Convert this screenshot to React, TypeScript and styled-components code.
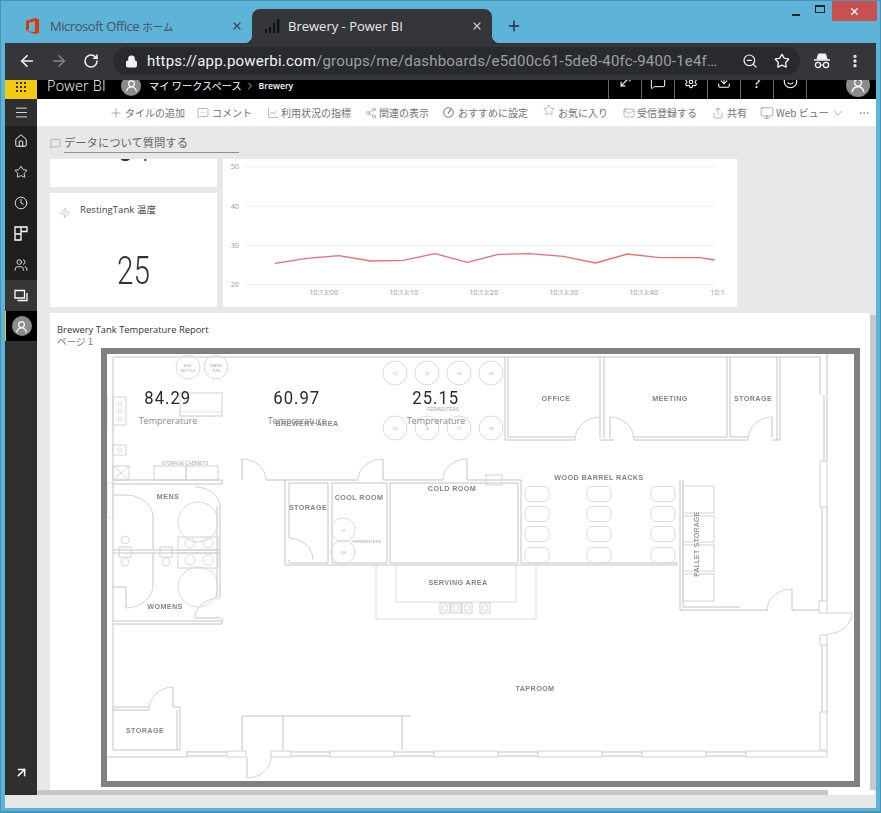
import React from "react";
import styled, { createGlobalStyle } from "styled-components";
import {
  ArrowLeft, ArrowRight, RotateCw, Lock, ZoomOut, Star, MoreVertical, Plus, X, Home, Clock, Menu,
  ArrowUpRight, MessageSquare, MessageSquareMore, LineChart, Share2, Mail, Share, Monitor, ChevronDown, ChevronRight,
  MoreHorizontal, Zap, Download, Settings, Smile, Users, MoveDiagonal,
} from "lucide-react";

const UI = `"Open Sans", "Noto Sans CJK JP", sans-serif`;
const JP = `"Noto Sans CJK JP", "Open Sans", sans-serif`;

const Global = createGlobalStyle`
  html, body { margin: 0; padding: 0; background: #5eb3d9; }
  * { box-sizing: border-box; }
`;

const Win = styled.div`
  width: 881px; height: 813px; background: #5eb3d9; border-top: 1px solid #4a93b6;
  border-left: 1px solid #4a93b6; border-right: 1px solid #4a93b6; border-bottom: 2px solid #4a93b6;
  padding: 0 4px 3px 4px; display: flex; flex-direction: column; overflow: hidden; font-family: ${UI};
`;
const TabStrip = styled.div`height: 42px; flex: none; display: flex; align-items: flex-end; position: relative;`;
const Tab = styled.div<{ $active?: boolean }>`
  width: ${p => (p.$active ? 240 : 247)}px; height: 34px; display: flex; align-items: center; gap: ${p => (p.$active ? 8 : 10)}px;
  padding: 0 9px 0 ${p => (p.$active ? 12 : 21)}px; font: 13px ${UI}; border-radius: 8px 8px 0 0;
  color: ${p => (p.$active ? "#e8eaed" : "#46525c")}; background: ${p => (p.$active ? "#35363a" : "transparent")};
  flex: none; position: relative;
  ${p => p.$active && `
    &::before, &::after { content: ""; position: absolute; bottom: 0; width: 8px; height: 8px; }
    &::before { left: -8px; background: radial-gradient(circle at 0 0, transparent 8px, #35363a 8.5px); }
    &::after { right: -8px; background: radial-gradient(circle at 100% 0, transparent 8px, #35363a 8.5px); }
  `}
`;
const TabTitle = styled.span<{ $tight?: boolean }>`flex: 1; white-space: nowrap; overflow: hidden; letter-spacing: ${p => (p.$tight ? "-.45px" : "0")};`;
const TabKana = styled.span`font: 10.5px ${JP}; letter-spacing: 0; margin-left: 3px;`;
const NewTab = styled.div`width: 44px; height: 34px; display: flex; align-items: center; justify-content: center; color: #26323a;`;
const WinControls = styled.div`position: absolute; right: -1px; top: 0; display: flex; align-items: flex-start;`;
const WinButton = styled.div<{ $w: number; $close?: boolean }>`
  width: ${p => p.$w}px; height: 20px; display: flex; align-items: center; justify-content: center;
  background: ${p => (p.$close ? "#c75050" : "transparent")}; color: ${p => (p.$close ? "#fff" : "#222")};
`;
const MinBar = styled.div`width: 8px; height: 2px; background: #222; margin-top: 8px;`;
const MaxBox = styled.div`width: 10px; height: 8px; border: 1px solid #222; border-top-width: 2px; margin-top: -4px;`;

const Toolbar = styled.div`
  height: 37px; flex: none; background: #35363a; display: flex; align-items: flex-start; padding-top: 4px; color: #fff;
`;
const NavIcon = styled.div<{ $w: number; $dim?: boolean }>`
  width: ${p => p.$w}px; height: 28px; display: flex; align-items: center; justify-content: center; flex: none;
  color: ${p => (p.$dim ? "#86888b" : "#f1f3f4")};
`;
const Omnibox = styled.div`
  width: 687px; height: 28px; flex: none; background: #292a2d; border-radius: 14px;
  display: flex; align-items: center; padding-left: 12px;
`;
const Url = styled.div`
  width: 588px; margin-left: 9px; font: 15px "Roboto", sans-serif; color: #9aa0a6; white-space: nowrap; overflow: hidden;
  letter-spacing: .2px; flex: none;
`;
const UrlHost = styled.span`color: #f1f3f4;`;

const Body = styled.div`flex: 1; display: flex; flex-direction: column; background: #e8e8e8; min-height: 0;`;
const Row = styled.div`flex: 1; display: flex; min-height: 0;`;
const Footer = styled.div`height: 13px; flex: none; background: #e8e8e8;`;

const Nav = styled.div`width: 32px; flex: none; background: #2f2f2f; display: flex; flex-direction: column; color: #fff;`;
const Waffle = styled.div`
  height: 19px; background: #f2c811; display: grid; grid-template-columns: repeat(3, 2px); gap: 2px; justify-content: center;
  align-content: center; padding-bottom: 6px;
`;
const Dot = styled.i`width: 2px; height: 2px; background: #3a2f00; display: block;`;
const NavItem = styled.div<{ $h?: number; $bg?: string; $mark?: boolean }>`
  height: ${p => p.$h ?? 31}px; display: flex; align-items: center; justify-content: center; flex: none;
  background: ${p => p.$bg ?? "#1f1f1f"}; border-left: ${p => (p.$mark ? "1px solid #f2c811" : "0")};
`;
const NavSpacer = styled.div`flex: 1;`;
const NavBottom = styled.div`height: 30px; display: flex; align-items: flex-start; justify-content: center; color: #fff;`;

const Main = styled.div`flex: 1; min-width: 0; display: flex; flex-direction: column;`;
const Header = styled.div`
  height: 19px; flex: none; background: #000; color: #fff; display: flex; align-items: center; overflow: hidden; position: relative;
`;
const Brand = styled.div`width: 84px; padding-left: 10px; font: 300 14.5px ${UI}; line-height: 19px; margin-top: -9px; white-space: nowrap; flex: none; letter-spacing: .15px;`;
const Crumb = styled.div`font: 10.1px ${JP}; line-height: 14px; margin-left: 8px; white-space: nowrap; margin-top: -8px; letter-spacing: .1px;`;
const CrumbChevron = styled(ChevronRight)`margin: -8px 0 0 2px; flex: none;`;
const CrumbLeaf = styled.div`font: 600 8.6px ${UI}; line-height: 12px; margin-left: 3px; margin-top: -8px; white-space: nowrap;`;
const Avatar = styled.div<{ $d: number; $y?: number }>`
  width: ${p => p.$d}px; height: ${p => p.$d}px; border-radius: 50%; background: #8c8c8c; flex: none; overflow: hidden;
  display: flex; align-items: center; justify-content: center; margin-top: ${p => p.$y ?? 0}px;
`;
const HeadCells = styled.div`display: flex; margin-left: auto; height: 19px; align-items: stretch;`;
const HeadCell = styled.div`
  width: 33px; border-left: 1px solid #6a6a6a; display: flex; justify-content: center; align-items: center; overflow: hidden; flex: none;
  & > svg { margin-top: -16px; flex: none; }
`;
const HeadMark = styled.span`font: 600 14px "Open Sans", sans-serif; line-height: 16px; margin-top: -13px; color: #f7e9a8;`;
const HeadAvatarCell = styled.div`width: 70px; border-left: 1px solid #6a6a6a; flex: none; display: flex; justify-content: flex-end; padding-right: 6px; align-items: center;`;

const Commands = styled.div`
  height: 27px; flex: none; background: #fff; display: flex; align-items: center; padding-left: 72px; color: #727272;
  position: relative;
`;
const Cmd = styled.div<{ $w: number; $gap?: number }>`
  width: ${p => p.$w}px; flex: none; display: flex; align-items: center; gap: ${p => p.$gap ?? 2}px; font: 10px ${JP}; white-space: nowrap;
  & > svg { flex: none; }
`;
const RaisedStar = styled(Star)`margin-top: -5px;`;
const CmdChevron = styled(ChevronDown)`margin-left: -28px; flex: none;`;
const CmdMore = styled(MoreHorizontal)`margin-left: 13px; flex: none;`;

const Content = styled.div`
  flex: 1; min-height: 0; position: relative; overflow: hidden; padding: 0 0 0 13px; display: flex; flex-direction: column;
`;
const Ask = styled.div`height: 33px; flex: none; display: flex; align-items: flex-start; padding-top: 8px; color: #888;`;
const AskIcon = styled(MessageSquare)`margin-top: 4px; flex: none;`;
const AskField = styled.div`
  width: 175px; height: 19px; margin-left: 3px; border-bottom: 1px solid #8f8f8f; font: 11.3px ${JP}; color: #666; line-height: 17px; white-space: nowrap;
`;
const Tiles = styled.div`display: grid; grid-template-columns: 167px 514px; grid-template-rows: 28px 114px; gap: 6px; flex: none;`;
const Tile = styled.div`background: #fff; overflow: hidden; position: relative;`;
const CutNumber = styled.div`font: 300 38px "Roboto", sans-serif; color: #333; text-align: center; line-height: 38px; margin-top: -30px; transform: scaleX(.78);`;
const ChartTile = styled(Tile)`grid-column: 2; grid-row: 1 / span 2;`;
const TileHead = styled.div`display: flex; align-items: flex-start; padding: 10px 0 0 9px; gap: 9px; color: #999;`;
const TileIcon = styled(Zap)`margin-top: 4px; flex: none;`;
const TileTitle = styled.div`font: 9.6px ${UI}; color: #444; white-space: nowrap; line-height: 13px;`;
const BigNumber = styled.div`
  font: 300 38px "Roboto", sans-serif; color: #333; text-align: center; margin-top: 32px; line-height: 40px; transform: scaleX(.78);
`;
const Report = styled.div`
  flex: 1; min-height: 0; margin-top: 6px; background: #fff; display: flex; flex-direction: column; padding: 11px 0 0 7px; width: 820px;
`;
const ReportTitle = styled.div`font: 9.4px ${UI}; color: #333; line-height: 11px; white-space: nowrap;`;
const ReportPage = styled.div`font: 9.6px ${JP}; color: #777; line-height: 12px; white-space: nowrap;`;
const Frame = styled.div`
  width: 759px; height: 439px; margin: 1px 0 0 44px; border: 6px solid #808080; background: #fff; position: relative; flex: none; overflow: hidden;
`;
const Plan = styled.svg`display: block; width: 748px; height: 428px; filter: blur(.55px);`;
const ChartGraphic = styled.svg`display: block; width: 514px; height: 148px;`;
const Metric = styled.div<{ $x: number }>`
  position: absolute; left: ${p => p.$x}px; top: 33px; width: 80px; display: flex; flex-direction: column; align-items: center;
`;
const MetricValue = styled.div`font: 400 17.5px "Roboto", sans-serif; color: #2a2a2a; letter-spacing: 1.1px; line-height: 22px; transform: scaleX(.95);`;
const MetricLabel = styled.div`font: 9px ${UI}; color: #8a8a8a; line-height: 13px; margin-top: 5px;`;
const VScroll = styled.div`position: absolute; right: 0; top: 189px; bottom: 5px; width: 6px; background: #c8c8c8;`;
const HBar = styled.div`height: 5px; flex: none; position: absolute; left: 0; bottom: 0; width: 791px; background: #c8c8c8;`;
const Corner = styled.div`position: absolute; right: 1px; bottom: 0; width: 5px; height: 5px; background: #fff;`;

const OfficeLogo = () => (
  <svg width="14" height="16" viewBox="0 0 14 16"><path d="M0 3 9 0l4 1.2v13.6L9 16 0 13l9 1V3L3 4.5v7L0 13z" fill="#d83b01" /></svg>
);
const BarsLogo = () => (
  <svg width="16" height="16" viewBox="0 0 16 16" fill="#111"><rect x="1" y="11" width="2" height="4" /><rect x="5" y="9" width="2" height="6" /><rect x="9" y="5" width="2.2" height="10" /><rect x="13" y="1" width="2.4" height="14" /></svg>
);
const Incognito = () => (
  <svg width="18" height="16" viewBox="0 0 18 16" fill="none" stroke="#f1f3f4"><path d="M4 6 5.5 1h7L14 6z" fill="#f1f3f4" /><path d="M1 7h16" strokeWidth="1.5" /><circle cx="5" cy="12" r="2.6" strokeWidth="1.3" /><circle cx="13" cy="12" r="2.6" strokeWidth="1.3" /><path d="M7.6 12h2.8" /></svg>
);
const Person = ({ s }: { s: number }) => (
  <svg width={s} height={s} viewBox="0 0 20 20" fill="none" stroke="#fff" strokeWidth="1.6"><circle cx="10" cy="7.5" r="3.8" /><path d="M3.5 18c.6-4 3-6 6.5-6s5.900 2 6.500 6" /></svg>
);
const TilesIcon = () => (
  <svg width="15" height="15" viewBox="0 0 15 15" fill="none" stroke="#fff" strokeWidth="1.3"><path d="M1 1h6v7H1zM7 1h6v4.500H7zM1 8h6v6H1z" /></svg>
);
const StackIcon = () => (
  <svg width="14" height="14" viewBox="0 0 14 14" fill="none" stroke="#fff" strokeWidth="1.3"><path d="M1 1.500h9.500v7.500H1z" /><path d="M3.500 11.500H13V4" /></svg>
);
const DialIcon = () => (
  <svg width="11" height="11" viewBox="0 0 11 11" fill="none" stroke="currentColor"><circle cx="5.5" cy="5.500" r="4.800" /><path d="M5 6.500 7.800 2.300" strokeWidth="1.200" /></svg>
);

/* ---- floor plan data, all in page pixels ---- */
type L = [number, number, number, number];
const walls: L[] = [
  [113,357,820,357],[113,357,113,750],
  [113,480,222,480],[113,484,222,484],[222,480,222,484],[266,480,285,480],[285,480,358,480],[383,480,443,480],[467,480,521,480],
  [285,480,285,565],[289,483,328,483],[289,483,289,538],[289,560,289,563],[289,563,328,563],[328,483,328,563],[332,483,332,563],[332,483,387,483],[387,483,387,563],[332,563,387,563],
  [390,483,518,483],[390,483,390,563],[518,483,518,563],[390,563,518,563],[521,480,521,563],[285,565,678,565],[521,563,678,563],
  [505,357,505,440],[508,357,508,437],[508,437,575,437],[505,440,575,440],[600,357,600,438],[604,357,604,438],[600,440,614,440],[610,417,610,438],[634,437,727,437],[634,440,748,440],
  [727,357,727,437],[730,357,730,437],[730,437,748,437],[772,417,772,438],[777,357,777,440],[780,357,780,440],[772,440,780,440],
  [820,357,820,395],[827,345,827,395],[824,395,824,461],[827,395,827,461],[827,507,827,601],[822,507,822,601],[827,645,827,712],[822,645,822,712],
  [680,480,680,610],[683,480,683,607],[683,607,740,607],[680,610,768,610],[792,589,792,610],[792,610,820,610],
  [113,550,220,550],[113,553,220,553],[153,517,153,550],[153,553,153,585],[220,506,220,597],[217,506,217,597],[113,587,126,587],[126,587,126,608],
  [113,495,126,495],[195,618,220,618],[113,621,222,621],[113,624,222,624],[222,618,222,624],
  [113,707,149,707],[113,710,149,710],[173,687,173,707],[173,707,180,707],[177,710,177,750],[180,707,180,750],
  [113,750,180,750],[242,716,411,716],[242,716,242,750],[283,716,283,750],[402,716,402,750],[247,757,247,778],
  [242,459,242,480],[383,459,383,480],[467,459,467,480],
  [107,757,187,757],[187,751,187,757],[187,752,227,752],[187,756,227,756],[291,752,330,752],[291,756,330,756],[394,752,434,752],[394,756,434,756],[498,752,538,752],[498,756,538,756],[602,752,642,752],[602,756,642,756],[706,752,746,752],[706,756,746,756],
];
const faint: L[] = [
  [376,565,376,619],[376,619,536,619],[536,565,536,619],[396,565,396,602],[396,602,516,602],[516,565,516,602],[113,395,113,430],[107,395,107,430],
];
const boxes: [number, number, number, number][] = [
  [113,397,13,28],[113,445,13,10],[113,466,16,14],[154,466,32,14],[186,466,32,14],[180,393,42,23],[486,475,16,10],
  [178,537,40,13],[178,553,40,15],[119,547,12,10],[160,547,12,10],
  [683,486,31,27],[683,516,31,26],[683,545,31,26],[683,574,31,27],
  [819,601,8,12],[820,635,7,10],[820,461,7,46],[820,712,7,38],
  [227,751,19,6],[271,751,20,6],[330,751,64,6],[434,751,64,6],[538,751,64,6],[642,751,64,6],[746,751,81,6],
  [440,603,10,10],[451,603,10,10],[462,603,10,10],[480,603,10,10],
];
const arcs: string[] = [
  "M242 459A24 21 0 0 1 266 480","M383 459A25 21 0 0 0 358 480","M467 459A24 21 0 0 0 443 480","M289 538A25 22 0 0 1 313 560",
  "M600 417A25 23 0 0 0 575 440","M610 417A24 23 0 0 1 634 440","M772 417A24 23 0 0 0 748 440","M792 589A25 21 0 0 0 767 610",
  "M827 634A25 21 0 0 0 852 613H827","M126 495A27 22 0 0 1 153 517","M126 608A27 23 0 0 0 153 585","M195 487A25 20 0 0 1 220 507","M195 618A25 20 0 0 1 220 598",
  "M149 710A24 23 0 0 1 173 687","M247 778A24 21 0 0 0 271 757",
];
const circles: [number, number, number, string?][] = [
  [188,367,12],[216,367,12],[395,373,12,"#1"],[427,373,12,"#2"],[459,373,12,"#3"],[491,373,12,"#4"],[395,428,12,"#5"],[427,428,12,"#6"],[459,428,12,"#7"],[491,428,12,"#8"],
  [343,530,12,"#9"],[343,552,12,"#10"],[198,522,20],[198,587,20],[190,543,5],[208,543,5],[190,560,5],[208,560,5],[125,540,4],[125,562,4],[166,562,4],
  [445,608,3],[456,608,3],[467,608,3],[485,608,3],[119.500,404,2],[119.500,411,2],[119.500,419,2],[119.500,450,2],
];
const labels: [string, number, number][] = [
  ["MENS",168,496],["WOMENS",165,606],["STORAGE",308,507],["COOL ROOM",359,497],["COLD ROOM",452,488],["SERVING AREA",458,582],["OFFICE",556,398],["MEETING",670,398],["STORAGE",753,398],
  ["WOOD BARREL RACKS",599,477],["TAPROOM",535,688],["STORAGE",145,730],["BREWERY AREA",307,423],
];
const barrels = [537, 599, 663].flatMap(x => [494, 514, 534, 555].map(y => [x, y] as const));

const FloorPlan = () => (
  <Plan viewBox="107 354 748 428">
    <g fill="none" stroke="#c4c4c4" strokeWidth="1">
      {walls.map((w, i) => <line key={i} x1={w[0]} y1={w[1]} x2={w[2]} y2={w[3]} />)}
      {faint.map((w, i) => <line key={i} x1={w[0]} y1={w[1]} x2={w[2]} y2={w[3]} stroke="#dcdcdc" />)}
      {boxes.map((b, i) => <rect key={i} x={b[0]} y={b[1]} width={b[2]} height={b[3]} stroke="#d2d2d2" />)}
      {arcs.map((d, i) => <path key={i} d={d} stroke="#d2d2d2" />)}
      {circles.map((c, i) => <circle key={i} cx={c[0]} cy={c[1]} r={c[2]} stroke="#dadada" />)}
      {barrels.map(([x, y], i) => <rect key={i} x={x - 12} y={y - 7.500} width={24} height={15} rx={5} stroke="#dadada" />)}
      <rect x="107" y="483" width="6" height="34" stroke="#d2d2d2" strokeDasharray="1 1" />
      <rect x="180" y="412" width="42" height="4" stroke="#d2d2d2" strokeDasharray="1 1" />
      <path d="M113 466l16 14M129 466l-16 14" stroke="#d8d8d8" />
    </g>
    <g fontFamily="'Liberation Sans', sans-serif" fontWeight="700" fontSize="7.200" fill="#858585" textAnchor="middle" letterSpacing=".4">
      {labels.map(([t, x, y], i) => <text key={i} x={x} y={y + 2.500}>{t}</text>)}
      <text transform="translate(699 544) rotate(-90)" fontSize="6.800" fontWeight="400" fill="#777">PALLET STORAGE</text>
    </g>
    <g fontFamily="'Liberation Sans', sans-serif" fontSize="4" fill="#aaa" textAnchor="middle">
      {circles.filter(c => c[3]).map((c, i) => <text key={i} x={c[0]} y={c[1] + 1.500}>{c[3]}</text>)}
      <text x="185" y="465" fontSize="4.600">STORAGE CABINETS</text>
      <text x="443" y="411" fontSize="4.600">FERMENTERS</text>
      <text x="367" y="543" fontSize="4.200">FERMENTERS</text>
      <text x="188" y="367">BOIL</text><text x="188" y="371.500">KETTLE</text>
      <text x="216" y="367">MASH</text><text x="216" y="371.500">TUN</text>
    </g>
  </Plan>
);

const series = [[165,325],[260,310],[357,302],[452,318],[550,316],[645,296],[742,322],[835,298],[930,296],[1030,304],[1127,324],[1222,297],[1320,308],[1440,308],[1484,315]];
const ChartSvg = () => (
  <ChartGraphic viewBox="9 12 1542 444">
    {[35, 154, 271, 388].map(y => <line key={y} x1="75" x2="1485" y1={y} y2={y} stroke="#efefef" strokeWidth="3" />)}
    <g fontFamily="'Open Sans', sans-serif" fontSize="22" fill="#9a9a9a">
      {([["50", 35], ["40", 154], ["30", 271], ["20", 388]] as const).map(([t, y]) => <text key={t} x="32" y={y + 8}>{t}</text>)}
      {["10:13:00", "10:13:10", "10:13:20", "10:13:30", "10:13:40"].map((t, i) => <text key={t} x={311 + i * 240} y="420" textAnchor="middle">{t}</text>)}
      <text x="1471" y="420">10:1</text>
    </g>
    <polyline points={series.map(p => p.join(",")).join(" ")} fill="none" stroke="#f8686c" strokeWidth="4" />
  </ChartGraphic>
);

const commands: { w: number; gap?: number; icon: React.ReactNode; text: string }[] = [
  { w: 88, icon: <Plus size={14} strokeWidth={1} />, text: "タイルの追加" },
  { w: 70, gap: 3, icon: <MessageSquareMore size={12} strokeWidth={1} />, text: "コメント" },
  { w: 98, icon: <LineChart size={12} strokeWidth={1} />, text: "利用状況の指標" },
  { w: 78, icon: <Share2 size={12} strokeWidth={1} />, text: "関連の表示" },
  { w: 100, gap: 4, icon: <DialIcon />, text: "おすすめに設定" },
  { w: 80, gap: 3, icon: <RaisedStar size={12} strokeWidth={1} />, text: "お気に入り" },
  { w: 89, icon: <Mail size={12} strokeWidth={1} />, text: "受信登録する" },
  { w: 48, gap: 3, icon: <Share size={12} strokeWidth={1} />, text: "共有" },
  { w: 99, gap: 2, icon: <Monitor size={14} strokeWidth={1} />, text: "Web ビュー" },
];

export default function App() {
  return (
    <Win>
      <Global />
      <TabStrip>
        <Tab><OfficeLogo /><TabTitle $tight>Microsoft Office<TabKana>ホーム</TabKana></TabTitle><X size={12} color="#3c4650" strokeWidth={2.500} /></Tab>
        <Tab $active><BarsLogo /><TabTitle>Brewery - Power BI</TabTitle><X size={12} color="#c4c7ca" strokeWidth={2.500} /></Tab>
        <NewTab><Plus size={16} strokeWidth={2.200} /></NewTab>
        <WinControls>
          <WinButton $w={24}><MinBar /></WinButton>
          <WinButton $w={24}><MaxBox /></WinButton>
          <WinButton $w={45} $close><X size={11} strokeWidth={3} /></WinButton>
        </WinControls>
      </TabStrip>
      <Toolbar>
        <NavIcon $w={44}><ArrowLeft size={18} strokeWidth={2.300} /></NavIcon>
        <NavIcon $w={20} $dim><ArrowRight size={18} strokeWidth={2} /></NavIcon>
        <NavIcon $w={44}><RotateCw size={16} strokeWidth={2.300} /></NavIcon>
        <Omnibox>
          <Lock size={13} fill="#f1f3f4" color="#f1f3f4" strokeWidth={2} />
          <Url><UrlHost>https://app.powerbi.com</UrlHost>/groups/me/dashboards/e5d00c61-5de8-40fc-9400-1e4f…</Url>
          <NavIcon $w={30}><ZoomOut size={16} strokeWidth={1.800} /></NavIcon>
          <NavIcon $w={34}><Star size={16} strokeWidth={2} /></NavIcon>
        </Omnibox>
        <NavIcon $w={44}><Incognito /></NavIcon>
        <NavIcon $w={22}><MoreVertical size={16} strokeWidth={3} /></NavIcon>
      </Toolbar>
      <Body>
        <Row>
          <Nav>
            <Waffle>{Array.from({ length: 9 }, (_, i) => <Dot key={i} />)}</Waffle>
            <NavItem $h={27} $bg="#2f2f2f"><Menu size={15} strokeWidth={1.300} /></NavItem>
            <NavItem $h={30}><Home size={14} strokeWidth={1.600} /></NavItem>
            <NavItem><Star size={14} strokeWidth={1.400} /></NavItem>
            <NavItem><Clock size={14} strokeWidth={1.400} /></NavItem>
            <NavItem><TilesIcon /></NavItem>
            <NavItem><Users size={14} strokeWidth={1.400} /></NavItem>
            <NavItem $bg="#363636"><StackIcon /></NavItem>
            <NavItem $h={30} $bg="#000" $mark><Avatar $d={20}><Person s={15} /></Avatar></NavItem>
            <NavSpacer />
            <NavBottom><ArrowUpRight size={15} strokeWidth={2.400} /></NavBottom>
          </Nav>
          <Main>
            <Header>
              <Brand>Power BI</Brand>
              <Avatar $d={20} $y={-8}><Person s={15} /></Avatar>
              <Crumb>マイ ワークスペース</Crumb>
              <CrumbChevron size={12} strokeWidth={1.300} />
              <CrumbLeaf>Brewery</CrumbLeaf>
              <HeadCells>
                <HeadCell><MoveDiagonal size={15} strokeWidth={1.800} /></HeadCell>
                <HeadCell><MessageSquare size={16} strokeWidth={1.500} /></HeadCell>
                <HeadCell><Settings size={14} strokeWidth={1.800} /></HeadCell>
                <HeadCell><Download size={14} strokeWidth={1.800} /></HeadCell>
                <HeadCell><HeadMark>?</HeadMark></HeadCell>
                <HeadCell><Smile size={15} strokeWidth={1.800} /></HeadCell>
                <HeadAvatarCell><Avatar $d={24} $y={-9}><Person s={18} /></Avatar></HeadAvatarCell>
              </HeadCells>
            </Header>
            <Commands>
              {commands.map(c => <Cmd key={c.text} $w={c.w} $gap={c.gap}>{c.icon}<span>{c.text}</span></Cmd>)}
              <CmdChevron size={14} strokeWidth={1} />
              <CmdMore size={12} strokeWidth={1.200} />
            </Commands>
            <Content>
              <Ask>
                <AskIcon size={11} strokeWidth={1.100} />
                <AskField>データについて質問する</AskField>
              </Ask>
              <Tiles>
                <Tile><CutNumber>84</CutNumber></Tile>
                <ChartTile><ChartSvg /></ChartTile>
                <Tile>
                  <TileHead><TileIcon size={12} strokeWidth={1} /><TileTitle>RestingTank 温度</TileTitle></TileHead>
                  <BigNumber>25</BigNumber>
                </Tile>
              </Tiles>
              <Report>
                <ReportTitle>Brewery Tank Temperature Report</ReportTitle>
                <ReportPage>ページ 1</ReportPage>
                <Frame>
                  <FloorPlan />
                  <Metric $x={21}><MetricValue>84.29</MetricValue><MetricLabel>Temprerature</MetricLabel></Metric>
                  <Metric $x={150}><MetricValue>60.97</MetricValue><MetricLabel>Temprerature</MetricLabel></Metric>
                  <Metric $x={289}><MetricValue>25.15</MetricValue><MetricLabel>Temprerature</MetricLabel></Metric>
                </Frame>
              </Report>
              <VScroll />
              <HBar />
              <Corner />
            </Content>
          </Main>
        </Row>
        <Footer />
      </Body>
    </Win>
  );
}
